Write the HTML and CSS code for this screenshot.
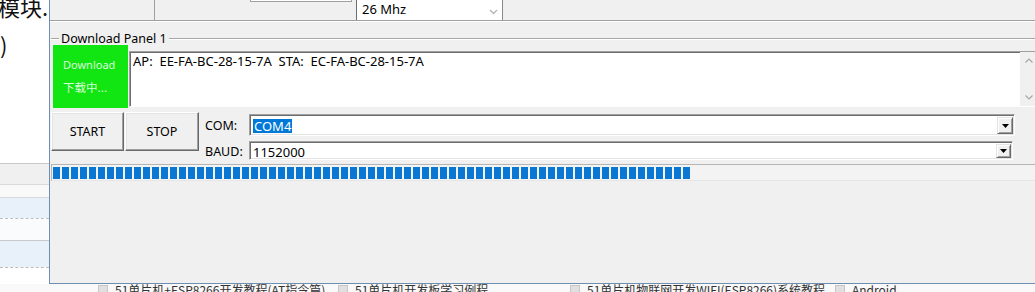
FILE: index.html
```html
<!DOCTYPE html>
<html lang="zh">
<head>
<meta charset="utf-8">
<title>ESP8266 Download Tool</title>
<link rel="stylesheet" href="styles.css">
</head>
<body>
<div class="screen">
  <aside class="web">
    <div class="web-text">
      <p class="wl wl-end">模块.</p>
      <p class="wl">)</p>
    </div>
    <div class="wrow line"></div>
    <div class="wrow head"></div>
    <div class="wrow line light"></div>
    <div class="wrow gap"></div>
    <div class="wrow line light"></div>
    <div class="wrow alt"></div>
    <div class="wrow dash"></div>
    <div class="wrow plain"></div>
    <div class="wrow line"></div>
    <div class="wrow alt tall"></div>
    <div class="wrow dash"></div>
    <div class="wrow rest"></div>
  </aside>

  <main class="win">
    <div class="toolbar">
      <div class="tb-cell tb-first"></div>
      <div class="tb-cell tb-second"></div>
      <div class="tb-edge"></div>
      <div class="tb-spacer"></div>
      <div class="tb-combo">
        <span class="tb-val">26 Mhz</span>
        <svg class="tb-chev" width="9" height="6" viewBox="0 0 9 6"><polyline points="1,1 4.5,4.5 8,1" fill="none" stroke="#b4b4b4" stroke-width="1.3"/></svg>
      </div>
      <div class="tb-rest"></div>
    </div>

    <section class="group">
      <div class="group-title"><span>Download Panel 1</span></div>
      <div class="panel-top">
        <div class="status">
          <div class="st-en">Download</div>
          <div class="st-cn">下载中...</div>
        </div>
        <div class="log">
          <div class="log-text">AP:  EE-FA-BC-28-15-7A  STA:  EC-FA-BC-28-15-7A</div>
          <div class="vscroll">
            <div class="sb-btn"><svg width="8" height="5" viewBox="0 0 8 5"><polyline points="0.5,4.5 4,1 7.5,4.5" fill="none" stroke="#a6a6a6" stroke-width="1.2"/></svg></div>
            <div class="sb-btn"><svg width="8" height="5" viewBox="0 0 8 5"><polyline points="0.5,0.5 4,4 7.5,0.5" fill="none" stroke="#a6a6a6" stroke-width="1.2"/></svg></div>
          </div>
        </div>
      </div>

      <div class="controls">
        <button class="btn btn-start">START</button>
        <button class="btn btn-stop">STOP</button>
        <div class="ports">
          <div class="port-row">
            <span class="plabel">COM:</span>
            <div class="combo combo-com">
              <span class="sel">COM4</span>
              <span class="dd"><svg width="7" height="4" viewBox="0 0 7 4"><polygon points="0,0 7,0 3.5,4" fill="#000"/></svg></span>
            </div>
          </div>
          <div class="port-row">
            <span class="plabel plabel-baud">BAUD:</span>
            <div class="combo combo-baud">
              <span class="val">1152000</span>
              <span class="dd"><svg width="7" height="4" viewBox="0 0 7 4"><polygon points="0,0 7,0 3.5,4" fill="#000"/></svg></span>
            </div>
          </div>
        </div>
      </div>

      <div class="progress"><div class="progress-fill" style="width:637px"></div></div>
    </section>
  </main>

  <nav class="tabs">
    <div class="tab"><i class="tab-ico"></i><span>51单片机+ESP8266开发教程(AT指令篇)</span></div>
    <div class="tab"><i class="tab-ico"></i><span>51单片机开发板学习例程</span></div>
    <div class="tab"><i class="tab-ico"></i><span>51单片机物联网开发WIFI(ESP8266)系统教程</span></div>
    <div class="tab"><i class="tab-ico"></i><span>Android</span></div>
  </nav>
</div>
</body>
</html>
```

FILE: styles.css
```css
html, body {
  margin: 0;
  padding: 0;
  background: #ffffff;
}

.screen {
  width: 1035px;
  height: 292px;
  overflow: hidden;
  display: grid;
  grid-template-columns: 49px 986px;
  grid-template-rows: 284px 8px;
  font-family: "Noto Sans", "Noto Sans CJK SC", sans-serif;
  font-size: 12px;
  color: #000;
}

/* ---------- webpage behind (left strip) ---------- */
.web {
  grid-column: 1;
  grid-row: 1;
  display: flex;
  flex-direction: column;
  overflow: hidden;
  background: #fff;
}

.web-text {
  flex: none;
  height: 176px;
  margin-top: -13px;
  font-family: "Noto Sans CJK SC", sans-serif;
  font-size: 22px;
  line-height: 38px;
  color: #111;
  white-space: nowrap;
}

.wl {
  margin: 0;
}

.wl-end {
  display: flex;
  justify-content: flex-end;
  padding-right: 1px;
}

.wrow { flex: none; }
.wrow.line { height: 1px; background: #c9c9c9; }
.wrow.line.light { background: #dadada; }
.wrow.head { height: 20px; background: #f0f0f0; }
.wrow.gap { height: 12px; background: #f9f9f9; }
.wrow.alt { height: 20px; background: #e8f0f9; }
.wrow.alt.tall { height: 26px; }
.wrow.dash { height: 0; border-top: 1px dashed #bdbdbd; }
.wrow.plain { height: 21px; background: #fafbfc; }
.wrow.rest { flex: 1; background: #fff; }

/* ---------- application window ---------- */
.win {
  grid-column: 2;
  grid-row: 1;
  overflow: hidden;
  background: #f0f0f0;
  border-left: 1px solid #6f8eb0;
  border-bottom: 1px solid #6f8eb0;
  display: flex;
  flex-direction: column;
}

.toolbar {
  flex: none;
  display: flex;
  height: 20px;
  border-bottom: 1px solid #a0a0a0;
  box-shadow: 0 1px 0 #ffffff;
}

.tb-cell { box-sizing: border-box; }
.tb-first {
  width: 105px;
  border-right: 1px solid #a0a0a0;
}
.tb-second { width: 95px; }

.tb-edge {
  width: 102px;
  height: 2px;
  box-sizing: border-box;
  border: 1px solid #a0a0a0;
  border-top: none;
  background: #fff;
}

.tb-spacer { width: 4px; }

.tb-combo {
  box-sizing: border-box;
  width: 147px;
  display: flex;
  align-items: center;
  justify-content: space-between;
  background: #fff;
  border-left: 1px solid #6d6d6d;
  border-right: 1px solid #8a8a8a;
  padding: 0 4px 0 5px;
  font-size: 13px;
}

.tb-val { margin-top: -3px; }
.tb-chev { margin-top: 3px; }

.tb-rest { flex: 1; }

/* group box */
.group {
  margin-left: 1px;
  margin-top: 11px;
  display: flex;
  flex-direction: column;
}

.group-title {
  height: 13px;
  display: flex;
  align-items: center;
  line-height: 13px;
  font-size: 12.5px;
}

.group-title::before,
.group-title::after {
  content: "";
  height: 1px;
  background: #a8a8a8;
  box-shadow: 0 1px 0 #fff;
}

.group-title::before { width: 8px; }
.group-title::after { flex: 1; }

.group-title span {
  padding: 0 2px;
  margin-top: -1px;
  color: #000;
}

.panel-top {
  display: flex;
  align-items: flex-start;
}

.status {
  flex: none;
  width: 75px;
  height: 63px;
  margin-left: 2px;
  box-sizing: border-box;
  background: #12e612;
  color: #d9fbd9;
  padding: 9px 0 0 10px;
  line-height: 22px;
}

.st-en { font-size: 11px; }
.st-cn { font-size: 11.5px; font-family: "Noto Sans CJK SC", sans-serif; }

.log {
  flex: none;
  width: 909px;
  height: 56px;
  margin-left: 1px;
  margin-top: 6px;
  box-sizing: border-box;
  display: flex;
  background: #fff;
  border: 1px solid;
  border-color: #a0a0a0 #ffffff #ffffff #a0a0a0;
  box-shadow: inset 1px 1px 0 #6d6d6d;
}

.log-text {
  flex: 1;
  padding: 1px 0 0 3px;
  white-space: pre;
  line-height: 17px;
  font-size: 13px;
}

.vscroll {
  flex: none;
  width: 17px;
  background: #f0f0f0;
  display: flex;
  flex-direction: column;
  justify-content: space-between;
}

.sb-btn {
  height: 17px;
  display: flex;
  align-items: center;
  justify-content: center;
}

/* buttons and ports */
.controls {
  display: flex;
  align-items: flex-start;
  margin-top: 4px;
}

.btn {
  flex: none;
  height: 39px;
  margin: 0;
  padding: 0;
  box-sizing: border-box;
  font-family: inherit;
  font-size: 12.5px;
  color: #000;
  background: #f0f0f0;
  border: 1px solid;
  border-color: #ffffff #696969 #696969 #ffffff;
  box-shadow: inset -1px -1px 0 #a0a0a0, inset 1px 1px 0 #e3e3e3;
}

.btn-start { width: 73px; margin-right: 1px; }
.btn-stop { width: 74px; }

.ports {
  margin-left: 6px;
  margin-top: 2px;
  display: flex;
  flex-direction: column;
  gap: 5px;
}

.port-row {
  display: flex;
  align-items: center;
}

.plabel {
  width: 44px;
  flex: none;
  font-size: 12.5px;
}

.plabel-baud { margin-top: 1px; }

.combo {
  box-sizing: border-box;
  display: flex;
  align-items: center;
  justify-content: space-between;
  background: #fff;
  border: 1px solid;
  border-color: #a0a0a0 #ffffff #ffffff #a0a0a0;
  box-shadow: inset 1px 1px 0 #6d6d6d, inset -1px -1px 0 #e3e3e3;
  padding: 2px 1px 1px 3px;
  font-size: 13px;
}

.combo-com { width: 766px; height: 22px; }
.combo-baud { width: 764px; height: 19px; }

.sel {
  background: #0078d7;
  color: #fff;
  padding: 0 1px 0 1px;
  line-height: 14px;
}

.val { line-height: 14px; margin-top: 1px; }

.dd {
  align-self: stretch;
  width: 16px;
  box-sizing: border-box;
  display: flex;
  align-items: center;
  justify-content: center;
  background: #f0f0f0;
  border: 1px solid;
  border-color: #e3e3e3 #696969 #696969 #e3e3e3;
  box-shadow: inset 1px 1px 0 #fff, inset -1px -1px 0 #a0a0a0;
}

.combo-baud .dd { width: 15px; }

/* progress bar */
.progress {
  margin-top: 4px;
  width: 990px;
  box-sizing: border-box;
  border: 1px solid;
  border-color: #b5b5b5 #ffffff #e6e6e6 #b5b5b5;
  background: #f3f3f3;
  padding: 2px 1px 1px 1px;
}

.progress-fill {
  height: 12px;
  background: repeating-linear-gradient(90deg, #0a77d2 0 7px, transparent 7px 9px);
}

/* ---------- tab strip of the page behind ---------- */
.tabs {
  grid-column: 1 / -1;
  grid-row: 2;
  background: #f9f9f9;
  display: grid;
  grid-template-columns: 240px 232px 265px auto;
  padding-left: 98px;
  font-family: "Noto Sans CJK SC", sans-serif;
  font-size: 12px;
  line-height: 12px;
  color: #333;
  white-space: nowrap;
  overflow: hidden;
}

.tab {
  display: flex;
  align-items: flex-start;
  gap: 7px;
}

.tab-ico {
  flex: none;
  width: 10px;
  height: 10px;
  margin-top: 1px;
  box-sizing: border-box;
  background: #e0e0e0;
  border: 1px solid #c6c6c6;
}
```
